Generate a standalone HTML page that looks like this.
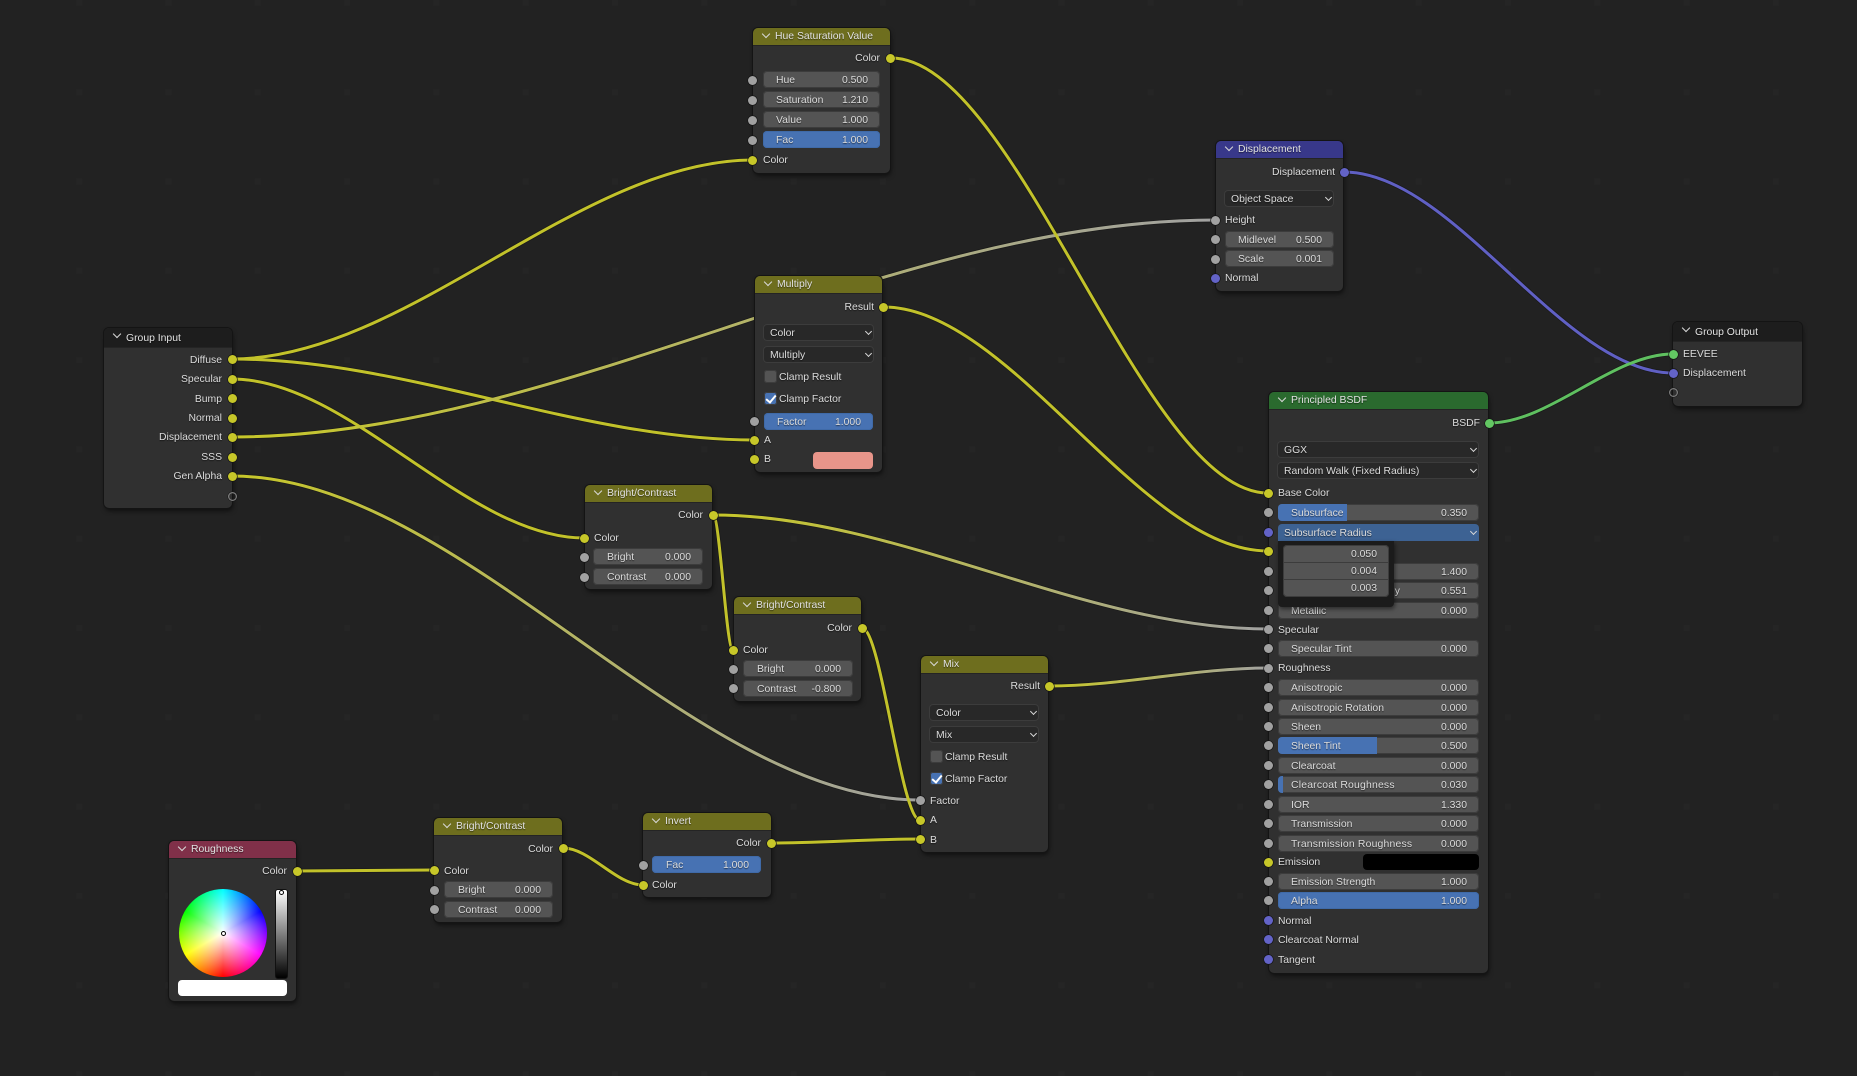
<!DOCTYPE html>
<html><head><meta charset="utf-8"><title>Node Editor</title>
<style>
html,body{margin:0;padding:0;background:#222;}
#r{position:relative;width:1857px;height:1076px;overflow:hidden;background:#222;font:10.4px "Liberation Sans",sans-serif;color:#dcdcdc;text-shadow:0 1px 1px rgba(0,0,0,.55);}
svg.l{position:absolute;left:0;top:0;}
.n{position:absolute;background:#303030;border-radius:5px;box-shadow:0 0 0 1px #141414,1px 3px 5px rgba(0,0,0,.55);overflow:visible;}
.h{position:absolute;left:0;right:0;top:0;height:17px;border-radius:5px 5px 0 0;line-height:18px;padding-left:22px;font-size:10.4px;color:#e2e2e2;white-space:nowrap;box-shadow:0 1px 0 rgba(0,0,0,.25);}
.h::before{content:"";position:absolute;left:10px;top:3px;width:5px;height:5px;border:solid #d8d8d8;border-width:0 1px 1px 0;transform:rotate(45deg);}
.ol{background:#6e6e1e;}.dk{background:#1d1d1d;}
.t{position:absolute;height:19px;line-height:19px;white-space:nowrap;}
.r{transform:translateX(-100%);}
.b{position:absolute;height:17px;line-height:19px;background:#545454;border-radius:4px;box-shadow:inset 0 0 0 1px #3c3c3c;white-space:nowrap;overflow:hidden;}
.bl{background:#4772b3;box-shadow:inset 0 0 0 1px #3f6aa8;}
.b i{position:absolute;left:14px;top:0;font-style:normal;}
.b em{position:absolute;right:12px;top:0;font-style:normal;}
.b s{position:absolute;left:0;top:0;bottom:0;background:#4772b3;text-decoration:none;}
.d{position:absolute;height:17px;line-height:19px;background:#282828;border-radius:4px;box-shadow:inset 0 0 0 1px #3c3c3c;padding-left:7px;box-sizing:border-box;white-space:nowrap;}
.d::after{content:"";position:absolute;right:3.5px;top:5px;width:4px;height:4px;border:solid #d8d8d8;border-width:0 1px 1px 0;transform:rotate(45deg);}
.c{position:absolute;width:13px;height:13px;border-radius:3px;background:#545454;box-shadow:inset 0 0 0 1px #3c3c3c;}
.c.on{background:#4772b3;}
.c.on::after{content:"";position:absolute;left:4px;top:1px;width:4px;height:8px;border:solid #fff;border-width:0 2px 2px 0;transform:rotate(40deg);}
.s{position:absolute;width:9px;height:9px;border-radius:50%;margin:-4.5px 0 0 -4.5px;box-shadow:0 0 0 .7px #151515;}
.y{background:#c7c729;}.g{background:#a1a1a1;}.p{background:#6363c7;}.e{background:#63c763;}
.o{background:transparent;box-shadow:inset 0 0 0 1.2px #7d7d7d,0 0 0 .5px #151515;}
.w{position:absolute;border-radius:4px;}
</style></head><body><div id="r">

<svg class="l" width="1857" height="1076" xmlns="http://www.w3.org/2000/svg">
<defs>
<pattern id="gr" x="615" y="628" width="89.3" height="89.3" patternUnits="userSpaceOnUse"><rect x="-3" y="-3" width="6" height="6" fill="#252525"/><rect x="86.3" y="-3" width="6" height="6" fill="#252525"/><rect x="-3" y="86.3" width="6" height="6" fill="#252525"/><rect x="86.3" y="86.3" width="6" height="6" fill="#252525"/></pattern>
<linearGradient id="g1" gradientUnits="userSpaceOnUse" x1="232" y1="0" x2="1215" y2="0"><stop offset="0" stop-color="#c7c729"/><stop offset="1" stop-color="#a1a1a1"/></linearGradient>
<linearGradient id="g2" gradientUnits="userSpaceOnUse" x1="232" y1="0" x2="920" y2="0"><stop offset="0" stop-color="#c7c729"/><stop offset="1" stop-color="#a1a1a1"/></linearGradient>
<linearGradient id="g3" gradientUnits="userSpaceOnUse" x1="713" y1="0" x2="1268" y2="0"><stop offset="0" stop-color="#c7c729"/><stop offset="1" stop-color="#a1a1a1"/></linearGradient>
<linearGradient id="g4" gradientUnits="userSpaceOnUse" x1="1049" y1="0" x2="1268" y2="0"><stop offset="0" stop-color="#c7c729"/><stop offset="1" stop-color="#a1a1a1"/></linearGradient>
</defs>
<rect width="1857" height="1076" fill="url(#gr)"/>
<g fill="none" stroke="#151515" stroke-width="4.6" opacity=".6">
<path d="M232 359C406 359 579 160 753 160"/>
<path d="M232 359C406 359 580 440 754 440"/>
<path d="M232 379C349 379 467 538 584 538"/>
<path d="M232 437C560 437 887 220 1215 220"/>
<path d="M232 476C461 476 691 800 920 800"/>
<path d="M891 58C1017 58 1142 493 1268 493"/>
<path d="M883 307C1011 307 1140 551 1268 551"/>
<path d="M713 515C898 515 1083 629 1268 629"/>
<path d="M713 515C720 515 726 650 733 650"/>
<path d="M862 628C881 628 901 820 920 820"/>
<path d="M1049 686C1122 686 1195 668 1268 668"/>
<path d="M771 843C821 843 870 839 920 839"/>
<path d="M563 848C590 848 616 885 643 885"/>
<path d="M297 871C343 871 388 870 434 870"/>
<path d="M1344 172C1454 172 1563 373 1673 373"/>
<path d="M1489 423C1550 423 1612 354 1673 354"/>
</g>
<g fill="none" stroke-width="3">
<path stroke="#c2c22a" d="M232 359C406 359 579 160 753 160"/>
<path stroke="#c2c22a" d="M232 359C406 359 580 440 754 440"/>
<path stroke="#c2c22a" d="M232 379C349 379 467 538 584 538"/>
<path stroke="url(#g1)" d="M232 437C560 437 887 220 1215 220"/>
<path stroke="url(#g2)" d="M232 476C461 476 691 800 920 800"/>
<path stroke="#c2c22a" d="M891 58C1017 58 1142 493 1268 493"/>
<path stroke="#c2c22a" d="M883 307C1011 307 1140 551 1268 551"/>
<path stroke="url(#g3)" d="M713 515C898 515 1083 629 1268 629"/>
<path stroke="#c2c22a" d="M713 515C720 515 726 650 733 650"/>
<path stroke="#c2c22a" d="M862 628C881 628 901 820 920 820"/>
<path stroke="url(#g4)" d="M1049 686C1122 686 1195 668 1268 668"/>
<path stroke="#c2c22a" d="M771 843C821 843 870 839 920 839"/>
<path stroke="#c2c22a" d="M563 848C590 848 616 885 643 885"/>
<path stroke="#c2c22a" d="M297 871C343 871 388 870 434 870"/>
<path stroke="#6060c4" d="M1344 172C1454 172 1563 373 1673 373"/>
<path stroke="#5fc060" d="M1489 423C1550 423 1612 354 1673 354"/>
</g>
</svg>

<!-- Hue Saturation Value -->
<div class="n" style="left:753px;top:28px;width:137px;height:145px"><div class="h ol">Hue Saturation Value</div></div>
<div class="t r" style="left:880px;top:49px">Color</div>
<div class="b" style="left:763px;top:71px;width:117px"><i style="left:13px">Hue</i><em>0.500</em></div>
<div class="b" style="left:763px;top:91px;width:117px"><i style="left:13px">Saturation</i><em>1.210</em></div>
<div class="b" style="left:763px;top:111px;width:117px"><i style="left:13px">Value</i><em>1.000</em></div>
<div class="b bl" style="left:763px;top:131px;width:117px"><i style="left:13px">Fac</i><em>1.000</em></div>
<div class="t" style="left:763px;top:151px">Color</div>
<div class="s y" style="left:890.5px;top:58px"></div>
<div class="s g" style="left:752.5px;top:80px"></div><div class="s g" style="left:752.5px;top:100px"></div><div class="s g" style="left:752.5px;top:120px"></div><div class="s g" style="left:752.5px;top:140px"></div><div class="s y" style="left:752.5px;top:160px"></div>

<!-- Group Input -->
<div class="n" style="left:104px;top:328px;width:128px;height:180px"><div class="h dk" style="height:19px;line-height:21px">Group Input</div></div>
<div class="t r" style="left:222px;top:351px">Diffuse</div>
<div class="t r" style="left:222px;top:370px">Specular</div>
<div class="t r" style="left:222px;top:390px">Bump</div>
<div class="t r" style="left:222px;top:409px">Normal</div>
<div class="t r" style="left:222px;top:428px">Displacement</div>
<div class="t r" style="left:222px;top:448px">SSS</div>
<div class="t r" style="left:222px;top:467px">Gen Alpha</div>
<div class="s y" style="left:232px;top:359px"></div><div class="s y" style="left:232px;top:379px"></div><div class="s y" style="left:232px;top:398px"></div><div class="s y" style="left:232px;top:418px"></div><div class="s y" style="left:232px;top:437px"></div><div class="s y" style="left:232px;top:457px"></div><div class="s y" style="left:232px;top:476px"></div><div class="s o" style="left:232px;top:496px"></div>

<!-- Multiply -->
<div class="n" style="left:755px;top:276px;width:127px;height:196px"><div class="h ol">Multiply</div></div>
<div class="t r" style="left:874px;top:298px">Result</div>
<div class="d" style="left:763px;top:324px;width:111px">Color</div>
<div class="d" style="left:763px;top:346px;width:111px">Multiply</div>
<div class="c" style="left:764px;top:370px"></div><div class="t" style="left:779px;top:368px">Clamp Result</div>
<div class="c on" style="left:764px;top:392px"></div><div class="t" style="left:779px;top:390px">Clamp Factor</div>
<div class="b bl" style="left:764px;top:413px;width:109px"><i style="left:13px">Factor</i><em>1.000</em></div>
<div class="t" style="left:764px;top:431px">A</div>
<div class="t" style="left:764px;top:450px">B</div>
<div class="w" style="left:813px;top:452px;width:60px;height:17px;background:#e8958a"></div>
<div class="s y" style="left:883px;top:307px"></div><div class="s g" style="left:754px;top:421px"></div><div class="s y" style="left:754px;top:440px"></div><div class="s y" style="left:754px;top:459px"></div>

<!-- Bright/Contrast 1 -->
<div class="n" style="left:585px;top:485px;width:127px;height:104px"><div class="h ol">Bright/Contrast</div></div>
<div class="t r" style="left:703px;top:506px">Color</div>
<div class="t" style="left:594px;top:529px">Color</div>
<div class="b" style="left:593px;top:548px;width:110px"><i>Bright</i><em>0.000</em></div>
<div class="b" style="left:593px;top:568px;width:110px"><i>Contrast</i><em>0.000</em></div>
<div class="s y" style="left:713px;top:515px"></div><div class="s y" style="left:584px;top:538px"></div><div class="s g" style="left:584px;top:557px"></div><div class="s g" style="left:584px;top:577px"></div>

<!-- Bright/Contrast 2 -->
<div class="n" style="left:734px;top:597px;width:127px;height:104px"><div class="h ol">Bright/Contrast</div></div>
<div class="t r" style="left:852px;top:619px">Color</div>
<div class="t" style="left:743px;top:641px">Color</div>
<div class="b" style="left:743px;top:660px;width:110px"><i>Bright</i><em>0.000</em></div>
<div class="b" style="left:743px;top:680px;width:110px"><i>Contrast</i><em>-0.800</em></div>
<div class="s y" style="left:862px;top:628px"></div><div class="s y" style="left:733px;top:650px"></div><div class="s g" style="left:733px;top:669px"></div><div class="s g" style="left:733px;top:688px"></div>

<!-- Mix -->
<div class="n" style="left:921px;top:656px;width:127px;height:196px"><div class="h ol">Mix</div></div>
<div class="t r" style="left:1040px;top:677px">Result</div>
<div class="d" style="left:929px;top:704px;width:110px">Color</div>
<div class="d" style="left:929px;top:726px;width:110px">Mix</div>
<div class="c" style="left:930px;top:750px"></div><div class="t" style="left:945px;top:748px">Clamp Result</div>
<div class="c on" style="left:930px;top:772px"></div><div class="t" style="left:945px;top:770px">Clamp Factor</div>
<div class="t" style="left:930px;top:792px">Factor</div>
<div class="t" style="left:930px;top:811px">A</div>
<div class="t" style="left:930px;top:831px">B</div>
<div class="s y" style="left:1049px;top:686px"></div><div class="s g" style="left:920px;top:800px"></div><div class="s y" style="left:920px;top:820px"></div><div class="s y" style="left:920px;top:839px"></div>

<!-- Bright/Contrast 3 -->
<div class="n" style="left:434px;top:818px;width:128px;height:104px"><div class="h ol">Bright/Contrast</div></div>
<div class="t r" style="left:553px;top:840px">Color</div>
<div class="t" style="left:444px;top:862px">Color</div>
<div class="b" style="left:444px;top:881px;width:109px"><i>Bright</i><em>0.000</em></div>
<div class="b" style="left:444px;top:901px;width:109px"><i>Contrast</i><em>0.000</em></div>
<div class="s y" style="left:563px;top:848px"></div><div class="s y" style="left:434px;top:870px"></div><div class="s g" style="left:434px;top:890px"></div><div class="s g" style="left:434px;top:909px"></div>

<!-- Invert -->
<div class="n" style="left:643px;top:813px;width:128px;height:84px"><div class="h ol">Invert</div></div>
<div class="t r" style="left:761px;top:834px">Color</div>
<div class="b bl" style="left:652px;top:856px;width:109px"><i>Fac</i><em>1.000</em></div>
<div class="t" style="left:652px;top:876px">Color</div>
<div class="s y" style="left:771px;top:843px"></div><div class="s g" style="left:643px;top:865px"></div><div class="s y" style="left:643px;top:885px"></div>

<!-- Roughness -->
<div class="n" style="left:169px;top:841px;width:127px;height:160px"><div class="h" style="background:#803049">Roughness</div></div>
<div class="t r" style="left:287px;top:862px">Color</div>
<div style="position:absolute;left:179px;top:889px;width:88px;height:88px;border-radius:50%;background:radial-gradient(circle closest-side,#fff 0,rgba(255,255,255,0) 100%),conic-gradient(#0ff 0deg,#00f 60deg,#f0f 120deg,#f00 180deg,#ff0 240deg,#0f0 300deg,#0ff 360deg)"></div>
<div style="position:absolute;left:221px;top:931px;width:3px;height:3px;border-radius:50%;border:1px solid #000;background:#fff"></div>
<div style="position:absolute;left:275px;top:889px;width:13px;height:90px;box-sizing:border-box;border:1px solid #111;border-radius:3px;background:linear-gradient(#fff,#000)"></div>
<div style="position:absolute;left:279px;top:890px;width:3px;height:3px;border-radius:50%;border:1px solid #000;background:#fff"></div>
<div class="w" style="left:178px;top:980px;width:109px;height:16px;background:#fff"></div>
<div class="s y" style="left:297px;top:871px"></div>

<!-- Displacement -->
<div class="n" style="left:1216px;top:141px;width:127px;height:150px"><div class="h" style="background:#38388a">Displacement</div></div>
<div class="t r" style="left:1335px;top:163px">Displacement</div>
<div class="d" style="left:1224px;top:190px;width:110px">Object Space</div>
<div class="t" style="left:1225px;top:211px">Height</div>
<div class="b" style="left:1225px;top:231px;width:109px"><i style="left:13px">Midlevel</i><em>0.500</em></div>
<div class="b" style="left:1225px;top:250px;width:109px"><i style="left:13px">Scale</i><em>0.001</em></div>
<div class="t" style="left:1225px;top:269px">Normal</div>
<div class="s p" style="left:1344px;top:172px"></div><div class="s g" style="left:1215px;top:220px"></div><div class="s g" style="left:1215px;top:239px"></div><div class="s g" style="left:1215px;top:259px"></div><div class="s p" style="left:1215px;top:278px"></div>

<!-- Group Output -->
<div class="n" style="left:1673px;top:322px;width:129px;height:84px"><div class="h dk" style="height:19px;line-height:21px">Group Output</div></div>
<div class="t" style="left:1683px;top:345px">EEVEE</div>
<div class="t" style="left:1683px;top:364px">Displacement</div>
<div class="s e" style="left:1673px;top:354px"></div><div class="s p" style="left:1673px;top:373px"></div><div class="s o" style="left:1673px;top:392px"></div>

<!-- Principled BSDF -->
<div class="n" style="left:1269px;top:392px;width:219px;height:581px"><div class="h" style="background:#2a6a2e">Principled BSDF</div></div>
<div class="t r" style="left:1480px;top:414px">BSDF</div>
<div class="d" style="left:1277px;top:440.5px;width:202px">GGX</div>
<div class="d" style="left:1277px;top:462px;width:202px">Random Walk (Fixed Radius)</div>
<div class="t" style="left:1278px;top:484px">Base Color</div>
<div class="b" style="left:1278px;top:504px;width:201px"><s style="width:69px"></s><i style="left:13px">Subsurface</i><em>0.350</em></div>
<div class="d" style="left:1278px;top:524px;width:201px;background:#3d6293;box-shadow:none;border-radius:4px 4px 0 0;padding-left:6px">Subsurface Radius</div>
<div class="t" style="left:1278px;top:543px">Subsurface Color</div>
<div class="b" style="left:1278px;top:562.5px;width:201px"><i style="left:13px">Subsurface IOR</i><em>1.400</em></div>
<div class="b" style="left:1278px;top:582px;width:201px"><i style="left:13px;letter-spacing:.25px">Subsurface Anisotropy</i><em>0.551</em></div>
<div class="b" style="left:1278px;top:601.5px;width:201px"><i style="left:13px">Metallic</i><em>0.000</em></div>
<div class="t" style="left:1278px;top:620.5px">Specular</div>
<div class="b" style="left:1278px;top:640px;width:201px"><i style="left:13px">Specular Tint</i><em>0.000</em></div>
<div class="t" style="left:1278px;top:659px">Roughness</div>
<div class="b" style="left:1278px;top:678.5px;width:201px"><i style="left:13px">Anisotropic</i><em>0.000</em></div>
<div class="b" style="left:1278px;top:698.5px;width:201px"><i style="left:13px">Anisotropic Rotation</i><em>0.000</em></div>
<div class="b" style="left:1278px;top:717.5px;width:201px"><i style="left:13px">Sheen</i><em>0.000</em></div>
<div class="b" style="left:1278px;top:737px;width:201px"><s style="width:99px"></s><i style="left:13px">Sheen Tint</i><em>0.500</em></div>
<div class="b" style="left:1278px;top:756.5px;width:201px"><i style="left:13px">Clearcoat</i><em>0.000</em></div>
<div class="b" style="left:1278px;top:776px;width:201px"><s style="width:5px"></s><i style="left:13px;letter-spacing:.2px">Clearcoat Roughness</i><em>0.030</em></div>
<div class="b" style="left:1278px;top:795.5px;width:201px"><i style="left:13px">IOR</i><em>1.330</em></div>
<div class="b" style="left:1278px;top:814.5px;width:201px"><i style="left:13px">Transmission</i><em>0.000</em></div>
<div class="b" style="left:1278px;top:834.5px;width:201px"><i style="left:13px;letter-spacing:.2px">Transmission Roughness</i><em>0.000</em></div>
<div class="t" style="left:1278px;top:853px">Emission</div>
<div class="w" style="left:1363px;top:854px;width:116px;height:16px;background:#000"></div>
<div class="b" style="left:1278px;top:873px;width:201px"><i style="left:13px">Emission Strength</i><em>1.000</em></div>
<div class="b bl" style="left:1278px;top:892px;width:201px"><i style="left:13px">Alpha</i><em>1.000</em></div>
<div class="t" style="left:1278px;top:912px">Normal</div>
<div class="t" style="left:1278px;top:931px">Clearcoat Normal</div>
<div class="t" style="left:1278px;top:951px">Tangent</div>
<div class="s e" style="left:1489px;top:423px"></div>
<div class="s y" style="left:1268px;top:493px"></div><div class="s g" style="left:1268px;top:512px"></div><div class="s p" style="left:1268px;top:532px"></div><div class="s y" style="left:1268px;top:551px"></div><div class="s g" style="left:1268px;top:571px"></div><div class="s g" style="left:1268px;top:590px"></div><div class="s g" style="left:1268px;top:610px"></div><div class="s g" style="left:1268px;top:629px"></div><div class="s g" style="left:1268px;top:648px"></div><div class="s g" style="left:1268px;top:668px"></div><div class="s g" style="left:1268px;top:687px"></div><div class="s g" style="left:1268px;top:707px"></div><div class="s g" style="left:1268px;top:726px"></div><div class="s g" style="left:1268px;top:745px"></div><div class="s g" style="left:1268px;top:765px"></div><div class="s g" style="left:1268px;top:784px"></div><div class="s g" style="left:1268px;top:804px"></div><div class="s g" style="left:1268px;top:823px"></div><div class="s g" style="left:1268px;top:843px"></div><div class="s y" style="left:1268px;top:862px"></div><div class="s g" style="left:1268px;top:881px"></div><div class="s g" style="left:1268px;top:900px"></div><div class="s p" style="left:1268px;top:920px"></div><div class="s p" style="left:1268px;top:939px"></div><div class="s p" style="left:1268px;top:959px"></div>

<!-- Popup -->
<div style="position:absolute;left:1278px;top:541px;width:116px;height:66px;background:#1b1b1b;border-radius:0 0 4px 4px;box-shadow:1px 2px 4px rgba(0,0,0,.5)"></div>
<div class="b" style="left:1283px;top:545px;width:106px;height:18px;border-radius:4px 4px 0 0"><em>0.050</em></div>
<div class="b" style="left:1283px;top:562px;width:106px;height:18px;border-radius:0"><em>0.004</em></div>
<div class="b" style="left:1283px;top:579px;width:106px;height:18px;border-radius:0 0 4px 4px"><em>0.003</em></div>

</div></body></html>
